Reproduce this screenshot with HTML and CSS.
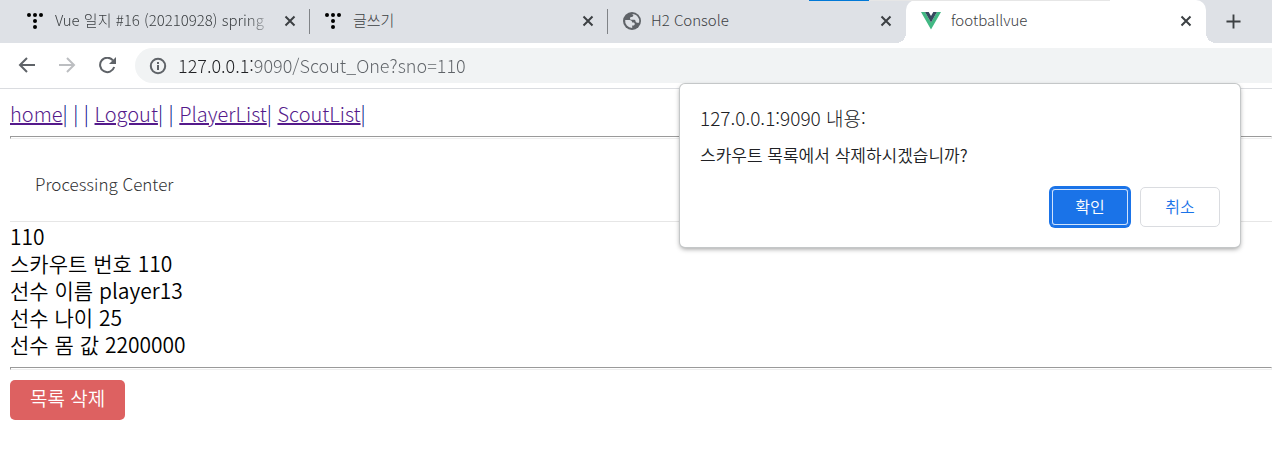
FILE: index.html
```html
<!DOCTYPE html>
<html lang="ko">
<head>
    <meta charset="UTF-8">
    <meta name="viewport" content="width=device-width, initial-scale=1.0">
    <title>footballvue</title>
    <link rel="stylesheet" href="styles.css">
</head>
<body>
    <header class="browser">
        <div class="tabs">
            <div class="loading"></div>
            <div class="tab">
                <svg class="favicon" viewBox="0 0 18 18"><g><circle cx="2" cy="3" r="2"/><circle cx="8" cy="3" r="2"/><circle cx="14" cy="3" r="2"/><circle cx="8" cy="9" r="2"/><circle cx="8" cy="15" r="2"/></g></svg>
                <span class="tab-title fade">Vue 일지 #16 (20210928) spring</span>
                <button class="close" aria-label="Close tab"><svg viewBox="0 0 12 12"><path d="M1.5 1.5l9 9M10.5 1.5l-9 9"/></svg></button>
            </div>
            <div class="tab">
                <svg class="favicon" viewBox="0 0 18 18"><g><circle cx="2" cy="3" r="2"/><circle cx="8" cy="3" r="2"/><circle cx="14" cy="3" r="2"/><circle cx="8" cy="9" r="2"/><circle cx="8" cy="15" r="2"/></g></svg>
                <span class="tab-title">글쓰기</span>
                <button class="close" aria-label="Close tab"><svg viewBox="0 0 12 12"><path d="M1.5 1.5l9 9M10.5 1.5l-9 9"/></svg></button>
            </div>
            <div class="tab">
                <svg class="favicon" viewBox="0 0 18 18"><circle cx="9" cy="9" r="9" fill="#5f6368"/><path d="M8.500 2c1 .2 1.800.8 1.800 1.600 0 .9-.7 1.400-1.600 1.400-1 0-1.700.5-1.700 1.400 0 .8.600 1.300 1.500 1.300h2.300c1.200 0 1.800.7 1.800 1.600 0 1 .7 1.400 1.600 1.400H16A7 7 0 0 0 8.500 2z" fill="#dee1e6"/><path d="M2.200 8h4.300c1.600 0 2.700 1 2.700 2.400h1c1 0 1.600.6 1.600 1.500s-.6 1.500-1.600 1.500h-1v2.600A7 7 0 0 1 2.200 8z" fill="#dee1e6"/></svg>
                <span class="tab-title">H2 Console</span>
                <button class="close" aria-label="Close tab"><svg viewBox="0 0 12 12"><path d="M1.5 1.5l9 9M10.5 1.5l-9 9"/></svg></button>
            </div>
            <div class="tab active">
                <svg class="favicon vue" viewBox="0 0 20 18"><path d="M0 0h4l6 10.500L16 0h4L10 17.500z" fill="#41b883"/><path d="M4 0h3.700L10 4l2.300-4H16l-6 10.500z" fill="#35495e"/></svg>
                <span class="tab-title">footballvue</span>
                <button class="close" aria-label="Close tab"><svg viewBox="0 0 12 12"><path d="M1.5 1.5l9 9M10.5 1.5l-9 9"/></svg></button>
            </div>
            <button class="new-tab" aria-label="New tab"><svg viewBox="0 0 16 16"><path d="M8 .5v15M.5 8h15"/></svg></button>
        </div>
        <div class="toolbar">
            <button class="tool" aria-label="Back"><svg viewBox="0 0 18 18"><path d="M17 8H2M9 1L2 8l7 7"/></svg></button>
            <button class="tool" aria-label="Forward" disabled><svg viewBox="0 0 18 18"><path d="M1 8h15M9 1l7 7-7 7"/></svg></button>
            <button class="tool" aria-label="Reload"><svg viewBox="0 0 18 18"><path d="M15 3.500A7.200 7.200 0 1 0 16.200 10"/><path class="solid" d="M18 0v7h-7z"/></svg></button>
            <div class="address">
                <svg viewBox="0 0 18 18"><circle cx="9" cy="9" r="7.200"/><path d="M9 8v5M9 5v2"/></svg>
                <input type="text" aria-label="Address" value="127.0.0.1:9090/Scout_One?sno=110">
            </div>
        </div>
    </header>

    <main class="page">
        <nav><a href="#">home</a>| | | <a href="#">Logout</a>| | <a href="#">PlayerList</a>| <a href="#">ScoutList</a>|</nav>
        <hr>
        <div class="menu">Processing Center</div>
        <div class="scout">
            <div>110</div>
            <div>스카우트 번호 110</div>
            <div>선수 이름 player13</div>
            <div>선수 나이 25</div>
            <div>선수 몸 값 2200000</div>
        </div>
        <hr>
        <button class="delete">목록 삭제</button>
    </main>

    <div class="dialog" role="dialog" aria-labelledby="dialog-title">
        <h2 id="dialog-title">127.0.0.1:9090 내용:</h2>
        <p>스카우트 목록에서 삭제하시겠습니까?</p>
        <div class="buttons">
            <button class="ok">확인</button>
            <button class="cancel">취소</button>
        </div>
    </div>
</body>
</html>
```
FILE: styles.css
```css
* {
    box-sizing: border-box;
}
body {
    margin: 0;
    background: white;
    color: #000;
    font-family: "Noto Sans CJK KR", sans-serif;
    font-size: 20px;
    font-weight: 300;
    line-height: 27px;
}
button, input {
    font-family: inherit;
    font-weight: inherit;
    margin: 0;
    padding: 0;
    border: 0;
    background: none;
}
svg {
    display: block;
    flex: none;
}

/* tab strip */
.tabs {
    position: relative;
    display: flex;
    height: 43px;
    padding-left: 12px;
    background: #dee1e6;
}
.loading {
    position: absolute;
    top: 0;
    left: 809px;
    width: 301px;
    height: 1px;
    background: linear-gradient(to right, #0078d7 60px, #e6e6e6 60px);
    z-index: 2;
}
.tab {
    position: relative;
    flex: 0 1 298px;
    min-width: 0;
    display: flex;
    align-items: center;
    padding: 0 12px 2px 15px;
    font-size: 15px;
    color: #3c4043;
}
.tab:not(.active)::after {
    content: "";
    position: absolute;
    right: 0;
    top: 9px;
    width: 1px;
    height: 25px;
    background: #808387;
}
.tab:nth-child(4)::after {
    display: none;
}
.tab.active {
    flex-basis: 300px;
    background: white;
    border-radius: 10px 10px 0 0;
}
.tab.active::before, .tab.active::after {
    content: "";
    position: absolute;
    bottom: 0;
    width: 10px;
    height: 10px;
}
.tab.active::before {
    left: -10px;
    background: radial-gradient(circle at 0 0, transparent 10px, white 10px);
}
.tab.active::after {
    right: -10px;
    background: radial-gradient(circle at 100% 0, transparent 10px, white 10px);
}
.favicon {
    width: 18px;
    height: 18px;
    margin-right: 10px;
}
.favicon g {
    fill: #000;
}
.vue {
    width: 20px;
}
.tab-title {
    flex: 1;
    overflow: hidden;
    white-space: nowrap;
    padding-bottom: 2px;
}
.fade {
    -webkit-mask-image: linear-gradient(to right, #000 88%, transparent);
    mask-image: linear-gradient(to right, #000 88%, transparent);
}
.close {
    width: 16px;
    height: 16px;
    padding: 2px;
    margin-left: 8px;
}
.close svg, .new-tab svg {
    width: 100%;
    fill: none;
    stroke: #3c4043;
    stroke-width: 2;
}
.new-tab {
    width: 15px;
    margin-left: 20px;
}

/* toolbar */
.toolbar {
    display: flex;
    align-items: center;
    height: 46px;
    padding-left: 18px;
    border-bottom: 1px solid #dadce0;
}
.tool {
    width: 18px;
    margin-right: 22px;
}
.tool svg, .address svg {
    width: 18px;
    height: 18px;
    fill: none;
    stroke: #5f6368;
    stroke-width: 2;
}
.tool .solid {
    fill: #5f6368;
    stroke: none;
}
.tool:disabled svg {
    stroke: #bcbec1;
}
.address {
    flex: 1;
    display: flex;
    align-items: center;
    height: 35px;
    margin-left: -3px;
    padding-left: 14px;
    background: #f1f3f4;
    border-radius: 18px 0 0 18px;
}
.address input {
    flex: 1;
    height: 27px;
    margin-left: 11px;
    padding-bottom: 2px;
    font-size: 18px;
    outline: 0;
    /* host is darker than the rest of the url */
    color: transparent;
    background: linear-gradient(to right, #202124 76px, #5f6368 76px);
    -webkit-background-clip: text;
    background-clip: text;
}

/* page */
.page {
    padding: 11px 0 20px 10px;
}
nav {
    color: #000080;
}
nav a {
    color: #551a8b;
}
hr {
    height: 3px;
    margin: 9px 0 10px;
    border: 1px solid #eee;
    border-top-color: #9a9a9a;
    border-left-color: #9a9a9a;
}
.menu {
    height: 73px;
    margin-bottom: 1px;
    padding: 21px 25px;
    border-bottom: 1px solid #e6e6e6;
    color: #303133;
    font-size: 17px;
}
.scout {
    font-size: 21px;
}
.delete {
    display: block;
    height: 40px;
    padding: 0 20px 5px;
    border-radius: 5px;
    background: #dd6161;
    color: white;
    font-size: 19px;
}

/* confirm dialog */
.dialog {
    position: absolute;
    top: 84px;
    right: 32px;
    width: 560px;
    padding: 20px;
    background: white;
    border-radius: 5px;
    box-shadow: 0 0 0 1px #c4c7c8, 0 2px 5px rgba(0, 0, 0, 0.4);
    color: #202124;
}
.dialog h2 {
    margin: 0;
    font-size: 19px;
    font-weight: 300;
}
.dialog p {
    margin: 10px 0 19px;
    font-size: 17px;
}
.scout, .delete, .dialog p, .buttons {
    font-weight: 350;
}
.buttons {
    display: flex;
    justify-content: flex-end;
    gap: 10px;
}
.buttons button {
    width: 80px;
    height: 40px;
    padding-bottom: 3px;
    border-radius: 5px;
    font-size: 16px;
}
.ok {
    background: #1a73e8;
    border: 1px solid #1a73e8;
    color: white;
    box-shadow: inset 0 0 0 1px #1a73e8, inset 0 0 0 2px #d2e3fc, 0 0 0 1px #1a73e8;
}
.cancel {
    border: 1px solid #dadce0;
    color: #1a73e8;
}
```
